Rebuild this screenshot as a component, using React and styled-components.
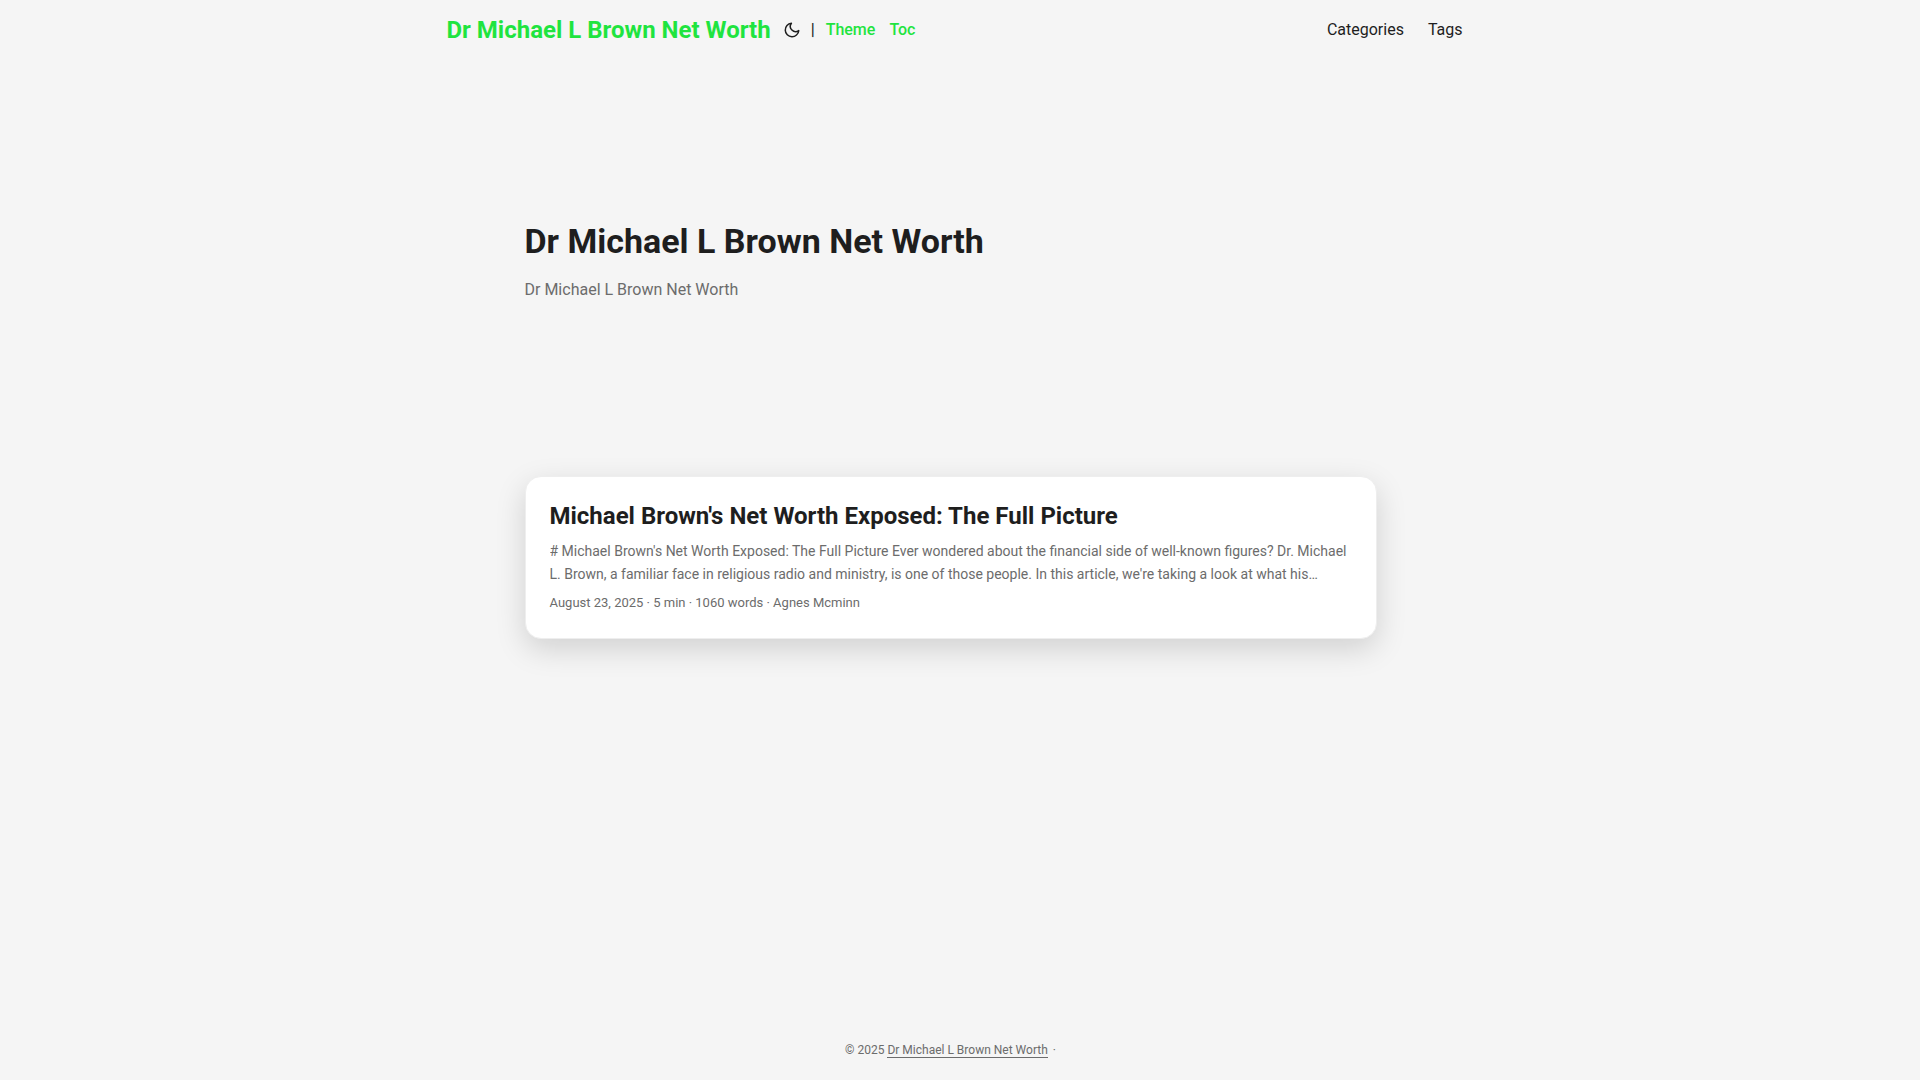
import { Fragment } from "react";
import styled, { createGlobalStyle } from "styled-components";

const GlobalStyle = createGlobalStyle`
  * {
    box-sizing: border-box;
    margin: 0;
    padding: 0;
  }

  body {
    font-family: Roboto, "Open Sans", sans-serif;
    font-size: 18px;
    line-height: 1.6;
    color: #1e1e1e;
    background: #f5f5f5;
  }

  a {
    color: inherit;
    text-decoration: none;
  }
`;

const Page = styled.div`
  display: flex;
  flex-direction: column;
  min-height: 100vh;
  padding-right: 19px;
`;

const Nav = styled.nav`
  display: flex;
  justify-content: space-between;
  width: 100%;
  max-width: 1072px;
  margin: 0 auto;
  padding: 0 24px 0 32px;
  line-height: 60px;
`;

const Group = styled.div`
  display: flex;
  align-items: center;
`;

const Logo = styled.a`
  font-size: 24px;
  font-weight: 700;
  color: #1fe43f;
`;

const ThemeToggle = styled.button`
  display: flex;
  align-items: center;
  height: 60px;
  margin: 0 10px 0 12px;
  border: 0;
  background: none;
  color: inherit;
  cursor: pointer;
`;

const Switches = styled.ul`
  display: flex;
  list-style: none;
  font-size: 16px;
  font-weight: 500;
`;

const Switch = styled.a`
  margin: 0 3px 0 11px;
  color: #1fe43f;
`;

const Menu = styled.ul`
  display: flex;
  gap: 24px;
  list-style: none;
  font-size: 16px;
`;

const Main = styled.main`
  flex: 1;
  width: 100%;
  max-width: 900px;
  margin: 0 auto;
  padding: 24px;
`;

const Intro = styled.header`
  display: flex;
  flex-direction: column;
  justify-content: center;
  min-height: 320px;
  margin: 24px 0 48px;
`;

const IntroTitle = styled.h1`
  font-size: 34px;
  line-height: 44px;
`;

const IntroText = styled.p`
  margin: 14px 0;
  font-size: 16px;
  line-height: 26px;
  color: #6c6c6c;
`;

const Card = styled.article`
  padding: 24px;
  border: 1px solid #eeeeee;
  border-radius: 16px;
  background: #ffffff;
  box-shadow: 0 10px 30px rgba(0, 0, 0, 0.15);
`;

const CardTitle = styled.h2`
  font-size: 24px;
  line-height: 31px;
`;

const Summary = styled.p`
  display: -webkit-box;
  margin: 8px 0 6px;
  overflow: hidden;
  font-size: 14px;
  line-height: 23px;
  color: #6c6c6c;
  -webkit-box-orient: vertical;
  -webkit-line-clamp: 2;
`;

const Meta = styled.footer`
  font-size: 13px;
  line-height: 22px;
  color: #6c6c6c;
`;

const Footer = styled.footer`
  padding: 18px 24px;
  font-size: 12px;
  line-height: 24px;
  text-align: center;
  color: #6c6c6c;

  a {
    margin-right: 2px;
    border-bottom: 1px solid #6c6c6c;
  }
`;

const siteName = "Dr Michael L Brown Net Worth";

const switches = ["Theme", "Toc"];

const menu = ["Categories", "Tags"];

const posts = [
  {
    title: "Michael Brown's Net Worth Exposed: The Full Picture",
    summary:
      "# Michael Brown's Net Worth Exposed: The Full Picture Ever wondered about the financial side of well-known figures? Dr. Michael L. Brown, a familiar face in religious radio and ministry, is one of those people. In this article, we're taking a look at what his…",
    meta: ["August 23, 2025", "5 min", "1060 words", "Agnes Mcminn"],
  },
];

const MoonIcon = () => (
  <svg
    width="18"
    height="18"
    viewBox="0 0 24 24"
    fill="none"
    stroke="currentColor"
    strokeWidth="2"
    strokeLinecap="round"
    strokeLinejoin="round"
  >
    <path d="M21 12.79A9 9 0 1 1 11.21 3 7 7 0 0 0 21 12.79z" />
  </svg>
);

const App = () => {
  return (
    <Fragment>
      <GlobalStyle />
      <Page>
        <Nav>
          <Group>
            <Logo href="#">{siteName}</Logo>
            <ThemeToggle type="button" aria-label="Toggle theme">
              <MoonIcon />
            </ThemeToggle>
            <Switches>
              <li>|</li>
              {switches.map((item) => (
                <li key={item}>
                  <Switch href={"#" + item.toLowerCase()}>{item}</Switch>
                </li>
              ))}
            </Switches>
          </Group>
          <Menu>
            {menu.map((item) => (
              <li key={item}>
                <a href={"#" + item.toLowerCase()}>{item}</a>
              </li>
            ))}
          </Menu>
        </Nav>
        <Main>
          <Intro>
            <IntroTitle>{siteName}</IntroTitle>
            <IntroText>{siteName}</IntroText>
          </Intro>
          {posts.map((post) => (
            <Card key={post.title}>
              <CardTitle>{post.title}</CardTitle>
              <Summary>{post.summary}</Summary>
              <Meta>{post.meta.join(" · ")}</Meta>
            </Card>
          ))}
        </Main>
        <Footer>
          © 2025 <a href="#">{siteName}</a> ·
        </Footer>
      </Page>
    </Fragment>
  );
};

export default App;
